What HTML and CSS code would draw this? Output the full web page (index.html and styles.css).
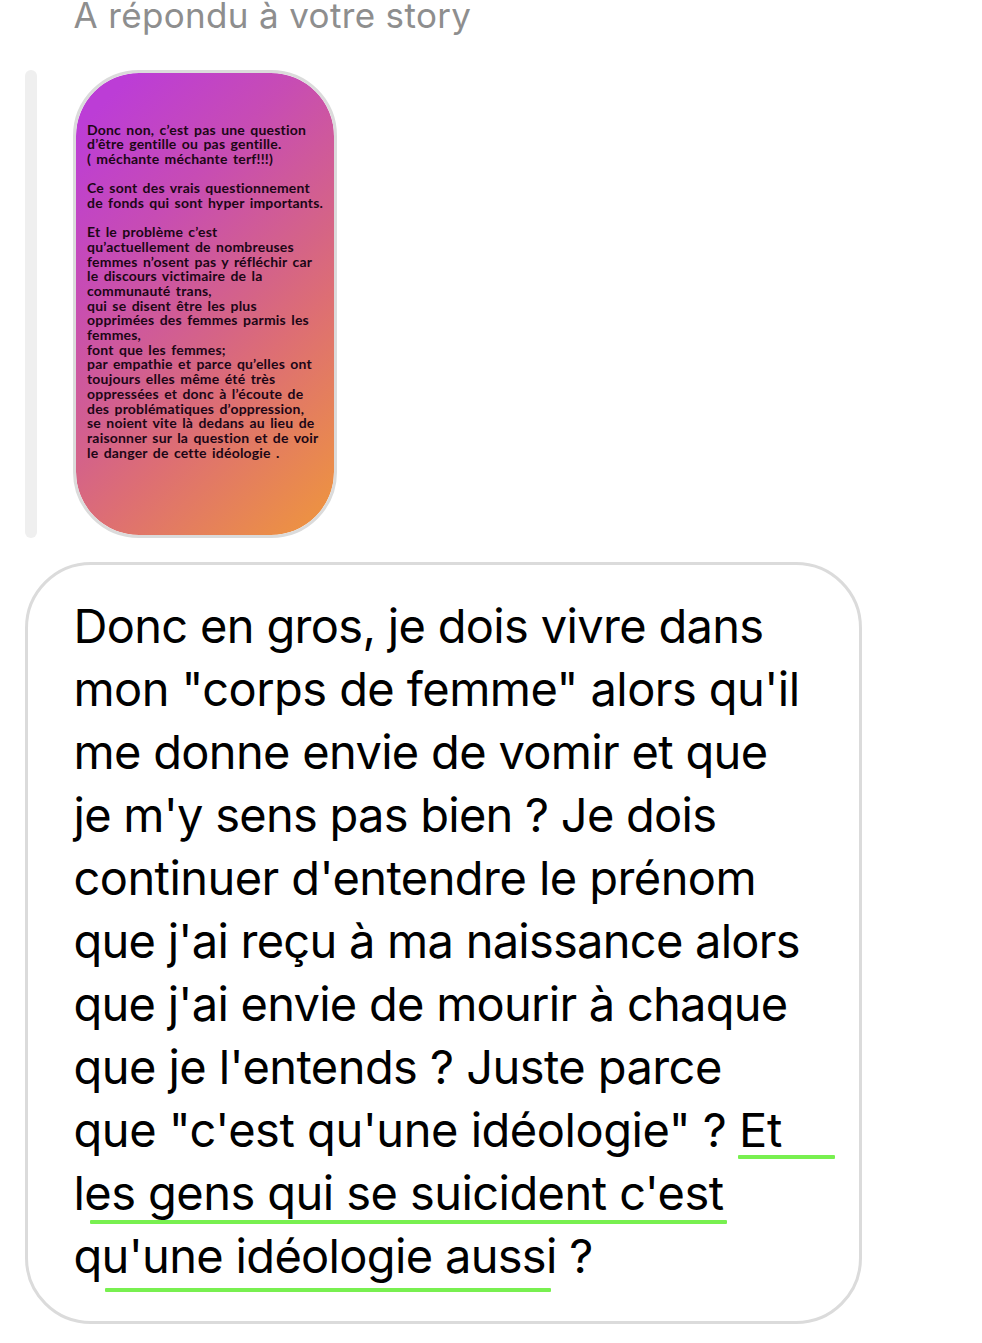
FILE: index.html
```
<!DOCTYPE html>
<html lang="fr">
<head>
  <meta charset="UTF-8">
  <meta name="viewport" content="width=device-width, initial-scale=1.0">
  <title>Messages</title>
  <link rel="stylesheet" href="styles.css">
</head>
<body>
  <div class="chat">
    <p class="reply-label">A répondu à votre story</p>

    <div class="story-reply">
      <div class="story-bar"></div>
      <div class="story">
        <p>Donc non, c’est pas une question<br>
          d’être gentille ou pas gentille.<br>
          ( méchante méchante terf!!!)</p>
        <p>Ce sont des vrais questionnement<br>
          de fonds qui sont hyper importants.</p>
        <p>Et le problème c’est<br>
          qu’actuellement de nombreuses<br>
          femmes n’osent pas y réfléchir car<br>
          le discours victimaire de la<br>
          communauté trans,<br>
          qui se disent être les plus<br>
          opprimées des femmes parmis les<br>
          femmes,<br>
          font que les femmes;<br>
          par empathie et parce qu’elles ont<br>
          toujours elles même été très<br>
          oppressées et donc à l’écoute de<br>
          des problématiques d’oppression,<br>
          se noient vite là dedans au lieu de<br>
          raisonner sur la question et de voir<br>
          le danger de cette idéologie .</p>
      </div>
    </div>

    <div class="bubble">
      <p class="message">Donc en gros, je dois vivre dans<br>
        <span class="wide">mon "corps de femme" alors qu'il</span><br>
        me donne envie de vomir et que<br>
        <span class="tight">je m'y sens pas bien ? Je dois</span><br>
        <span class="wide">continuer d'entendre le prénom</span><br>
        <span class="tight">que j'ai reçu à ma naissance alors</span><br>
        <span class="tight">que j'ai envie de mourir à chaque</span><br>
        <span class="wide">que je l'entends ? Juste parce</span><br>
        <span class="wider">que "c'est qu'une idéologie" ? Et</span><br>
        <span class="wide">les gens qui se suicident c'est</span><br>
        qu'une idéologie aussi ?</p>
      <span class="mark mark-1"></span>
      <span class="mark mark-2"></span>
      <span class="mark mark-3"></span>
    </div>
  </div>
</body>
</html>
```

FILE: styles.css
```
* {
  margin: 0;
  padding: 0;
  box-sizing: border-box;
}

body {
  background-color: #fff;
  font-family: Inter, "Liberation Sans", sans-serif;
}

.chat {
  width: 862px;
  height: 1343px;
  padding-left: 25px;
}

.reply-label {
  padding-left: 48.5px;
  margin-bottom: 40px;
  font-size: 35px;
  line-height: 30px;
  letter-spacing: 0.35px;
  color: #8e8e8e;
  white-space: nowrap;
}

.story-reply {
  display: flex;
  gap: 36px;
  height: 468px;
  margin-bottom: 24px;
}

.story-bar {
  width: 12px;
  border-radius: 6px;
  background-color: #efefef;
}

.story {
  width: 264px;
  padding: 49.5px 0 0 11px;
  border: 3px solid #dbdbdb;
  border-radius: 66px;
  background: linear-gradient(135deg, #bc3dd6 8%, #c74cb4 31%, #d56486 56%, #dd6e74 66%, #ec9045 94%) padding-box;
  font-family: Lato, sans-serif;
  font-size: 14px;
  font-weight: 700;
  line-height: 14.68px;
  letter-spacing: 0.2px;
  word-spacing: 1.7px;
  color: #1c0616;
  white-space: nowrap;
}

.story p + p {
  margin-top: 14.68px;
}

.bubble {
  position: relative;
  width: 837px;
  height: 762px;
  padding: 29px 0 0 45.5px;
  border: 3px solid #dbdbdb;
  border-radius: 66px;
}

.message {
  font-size: 47px;
  line-height: 63px;
  letter-spacing: -0.68px;
  color: #000;
  white-space: nowrap;
}

.tight {
  letter-spacing: -0.74px;
}

.wide {
  letter-spacing: -0.56px;
}

.wider {
  letter-spacing: -0.47px;
}

/* green highlighter strokes under the text */
.mark {
  position: absolute;
  height: 4px;
  border-radius: 1px;
  background-color: #78f050;
}

.mark-1 {
  top: 590px;
  left: 710px;
  width: 97px;
}

.mark-2 {
  top: 655px;
  left: 62px;
  width: 637px;
}

.mark-3 {
  top: 723px;
  left: 77px;
  width: 446px;
}
```
